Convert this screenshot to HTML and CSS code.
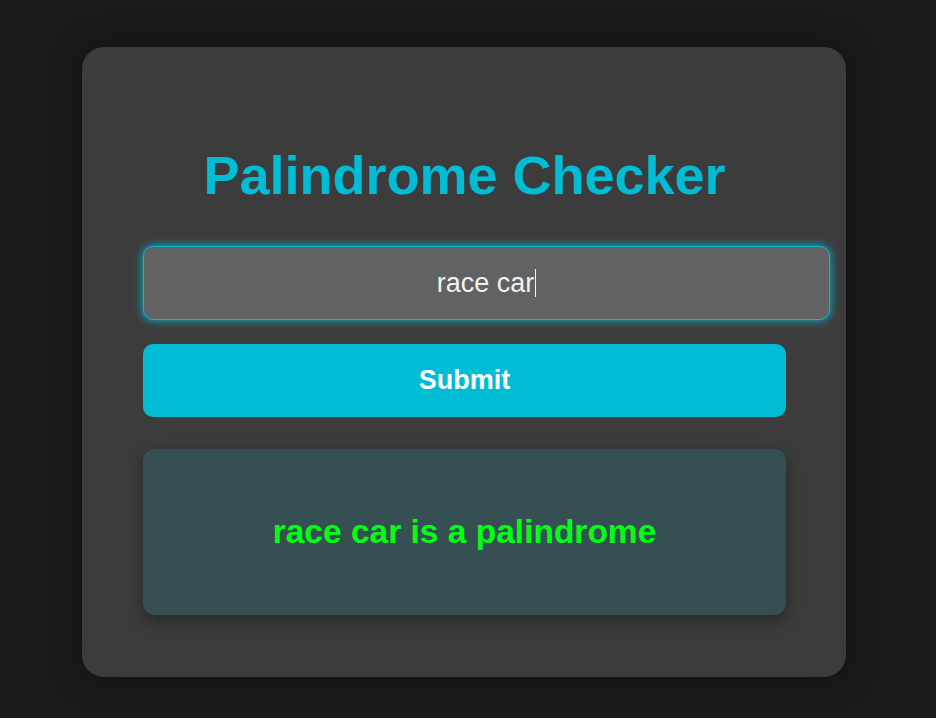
FILE: index.html
```html
<!DOCTYPE html>
<html lang="en">
<head>
<meta charset="utf-8">
<title>Palindrome Checker</title>
<link rel="stylesheet" href="styles.css">
</head>
<body>
<main class="card">
  <h1 class="title">Palindrome Checker</h1>
  <div class="text-input" role="textbox"><span class="value">race car</span><span class="caret"></span></div>
  <button class="submit" type="button">Submit</button>
  <div class="result"><p class="result-text">race car is a palindrome</p></div>
</main>
</body>
</html>
```

FILE: styles.css
```css
html, body {
  margin: 0;
  padding: 0;
}
body {
  background: #1a1a1a;
  font-family: "Liberation Sans", Arial, sans-serif;
  min-height: 718px;
  box-sizing: border-box;
  padding-top: 47px;
  padding-left: 82px;
}
.card {
  width: 764px;
  height: 630px;
  box-sizing: border-box;
  background: #3c3c3c;
  border-radius: 22px;
  padding: 97px 60px 60px 61px;
  box-shadow: 0 0 30px rgba(0,0,0,0.35);
  display: flex;
  flex-direction: column;
}
.title {
  margin: 0 0 40px;
  text-align: center;
  color: #00bcd4;
  font-size: 54px;
  line-height: 62px;
  font-weight: bold;
}
.text-input {
  width: 687px;
  height: 74px;
  box-sizing: border-box;
  background: #626262;
  border: 1px solid #00bcd4;
  border-radius: 10px;
  box-shadow: 0 0 10px #00bcd4;
  display: flex;
  align-items: center;
  justify-content: center;
  color: #f2f2f2;
  font-size: 27px;
}
.caret {
  display: inline-block;
  width: 1px;
  height: 28px;
  background: #f2f2f2;
  margin-left: 1px;
}
.submit {
  margin-top: 24px;
  width: 643px;
  height: 73px;
  border: none;
  border-radius: 10px;
  background: #00bcd4;
  color: #ffffff;
  font-family: "Liberation Sans", Arial, sans-serif;
  font-weight: bold;
  font-size: 27px;
  padding: 0;
}
.result {
  margin-top: 32px;
  width: 643px;
  height: 166px;
  border-radius: 12px;
  background: #364f53;
  box-shadow: 0 6px 16px rgba(0,0,0,0.35);
  display: flex;
  align-items: center;
  justify-content: center;
}
.result-text {
  margin: 0;
  color: #00ff14;
  font-weight: bold;
  font-size: 33.5px;
}
```
